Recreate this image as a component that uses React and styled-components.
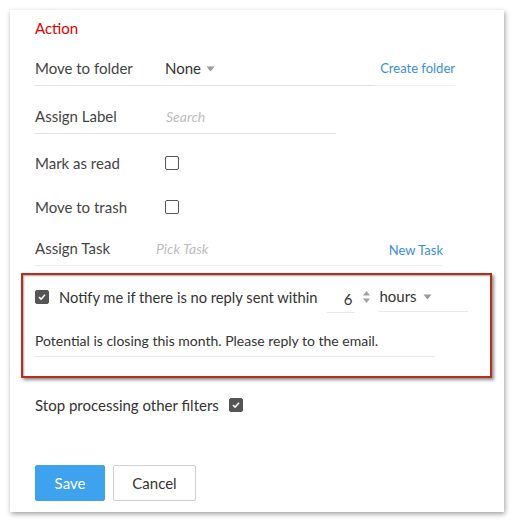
import React from 'react';
import styled, { createGlobalStyle } from 'styled-components';

const GlobalStyle = createGlobalStyle`
  body {
    margin: 0;
    background: #fff;
    font-family: Lato, "Open Sans", sans-serif;
    color: #333;
  }
`;

const CheckBox = ({ checked }) => (
  <CheckBoxStyle checked={checked}>
    {checked && (
      <svg width="10" height="10" viewBox="0 0 10 10">
        <path d="M2 5.2 L4.1 7.2 L8 2.8" fill="none" stroke="#fff" strokeWidth="1.6" />
      </svg>
    )}
  </CheckBoxStyle>
);

const Caret = () => (
  <svg width="9" height="6" viewBox="0 0 9 6">
    <path d="M0.5 0.5 H8.5 L4.5 5.5 Z" fill="#9a9a9a" />
  </svg>
);

const Spinner = () => (
  <svg width="9" height="14" viewBox="0 0 9 14">
    <path d="M1 5.5 L4.5 1 L8 5.5 Z" fill="#a0a0a0" />
    <path d="M1 8.5 L4.5 13 L8 8.5 Z" fill="#a0a0a0" />
  </svg>
);

const App = () => (
  <>
    <GlobalStyle />
    <Page>
      <Card>
        <Heading>Action</Heading>

        <FieldRow>
          <Field width={340}>
            <Label>Move to folder</Label>
            <Value>
              None <Caret />
            </Value>
          </Field>
          <LinkField width={80}>
            <Link>Create folder</Link>
          </LinkField>
        </FieldRow>

        <FieldRow top={20}>
          <Field width={301}>
            <Label>Assign Label</Label>
            <Placeholder offset={1}>Search</Placeholder>
          </Field>
        </FieldRow>

        <PlainRow top={19}>
          <Label>Mark as read</Label>
          <CheckBox />
        </PlainRow>

        <PlainRow top={24}>
          <Label>Move to trash</Label>
          <CheckBox />
        </PlainRow>

        <FieldRow top={21}>
          <Field width={408} light>
            <Label>Assign Task</Label>
            <Placeholder offset={-9}>Pick Task</Placeholder>
            <Link small>New Task</Link>
          </Field>
        </FieldRow>

        <HighlightBox>
          <NotifyRow>
            <CheckBox checked />
            <NotifyText>Notify me if there is no reply sent within</NotifyText>
            <NumberField>6</NumberField>
            <Spinner />
            <UnitField>
              hours <Caret />
            </UnitField>
          </NotifyRow>
          <MessageField>
            Potential is closing this month. Please reply to the email.
          </MessageField>
        </HighlightBox>

        <StopRow>
          Stop processing other filters
          <CheckBox checked />
        </StopRow>

        <Buttons>
          <Button primary>Save</Button>
          <Button>Cancel</Button>
        </Buttons>
      </Card>
    </Page>
  </>
);

const Page = styled.div`
  padding: 10px;
`;

const Card = styled.div`
  width: 494px;
  box-sizing: border-box;
  padding: 0 25px 11px;
  background: #fff;
  box-shadow: 1px 2px 5px rgba(0, 0, 0, 0.38);
  font-size: 15px;
`;

const Heading = styled.div`
  height: 36px;
  line-height: 36px;
  color: #e00000;
  font-size: 15px;
`;

const FieldRow = styled.div`
  display: flex;
  align-items: flex-end;
  padding-top: ${({ top }) => top || 12}px;
`;

const Field = styled.div`
  display: flex;
  align-items: center;
  width: ${({ width }) => width}px;
  height: 20px;
  padding-bottom: 7px;
  border-bottom: 1px solid ${({ light }) => (light ? '#ececec' : '#e2e2e2')};
`;

const LinkField = styled(Field)`
  justify-content: flex-end;
  border-bottom-color: #f2f2f2;
`;

const Label = styled.span`
  width: 130px;
  flex-shrink: 0;
  line-height: 20px;
  color: #444;
`;

const Value = styled.span`
  display: inline-flex;
  align-items: center;
  gap: 5px;
  color: #333;
  svg {
    margin-top: 2px;
  }
`;

const Placeholder = styled.span`
  flex: 1;
  margin-left: ${({ offset }) => offset}px;
  color: #bdbdbd;
  font-style: italic;
  font-size: 14px;
`;

const Link = styled.span`
  color: #3b8ee0;
  font-size: 13px;
  margin-top: ${({ small }) => (small ? 3 : 0)}px;
`;

const PlainRow = styled.div`
  display: flex;
  align-items: center;
  height: 20px;
  padding-top: ${({ top }) => top}px;
`;

const CheckBoxStyle = styled.span`
  display: inline-flex;
  align-items: center;
  justify-content: center;
  box-sizing: border-box;
  width: 14px;
  height: 14px;
  border: 1.5px solid #555;
  border-radius: 2px;
  background: ${({ checked }) => (checked ? '#555' : '#fff')};
`;

const HighlightBox = styled.div`
  margin: 7px -13px 0 -14px;
  padding: 0 12px 19px;
  border: 2px solid #b3301e;
  box-shadow: 2px 2px 3px rgba(0, 0, 0, 0.45),
    inset 1px 1px 2px rgba(0, 0, 0, 0.35);
`;

const NotifyRow = styled.div`
  display: flex;
  align-items: center;
  height: 20px;
  padding-top: 12px;
`;

const NotifyText = styled.span`
  margin-left: 10px;
  margin-right: 10px;
  font-size: 14.7px;
`;

const NumberField = styled.span`
  box-sizing: border-box;
  width: 28px;
  height: 26px;
  padding: 3px 3px 0 0;
  margin-top: 5px;
  margin-right: 7px;
  text-align: right;
  border-bottom: 1px solid #e8e8e8;
`;

const UnitField = styled.span`
  display: inline-flex;
  align-items: flex-start;
  gap: 6px;
  box-sizing: border-box;
  width: 89px;
  height: 26px;
  margin-left: 8px;
  margin-top: 3px;
  padding-top: 1px;
  border-bottom: 1px solid #e8e8e8;
  svg {
    margin-top: 7px;
  }
`;

const MessageField = styled.div`
  width: 399px;
  margin-top: 24px;
  line-height: 20px;
  padding-bottom: 5px;
  border-bottom: 1px solid #e8e8e8;
  font-size: 14px;
  color: #333;
`;

const StopRow = styled.div`
  display: flex;
  align-items: center;
  gap: 10px;
  height: 20px;
  padding-top: 17px;
`;

const Buttons = styled.div`
  display: flex;
  gap: 8px;
  padding-top: 50px;
`;

const Button = styled.button`
  box-sizing: border-box;
  width: ${({ primary }) => (primary ? 70 : 83)}px;
  height: 36px;
  border-radius: 2px;
  border: 1px solid ${({ primary }) => (primary ? '#3fa2ee' : '#cfcfcf')};
  background: ${({ primary }) => (primary ? '#3fa2ee' : '#fff')};
  color: ${({ primary }) => (primary ? '#fff' : '#333')};
  font-family: Lato, "Open Sans", sans-serif;
  font-size: 15px;
`;

export default App;
